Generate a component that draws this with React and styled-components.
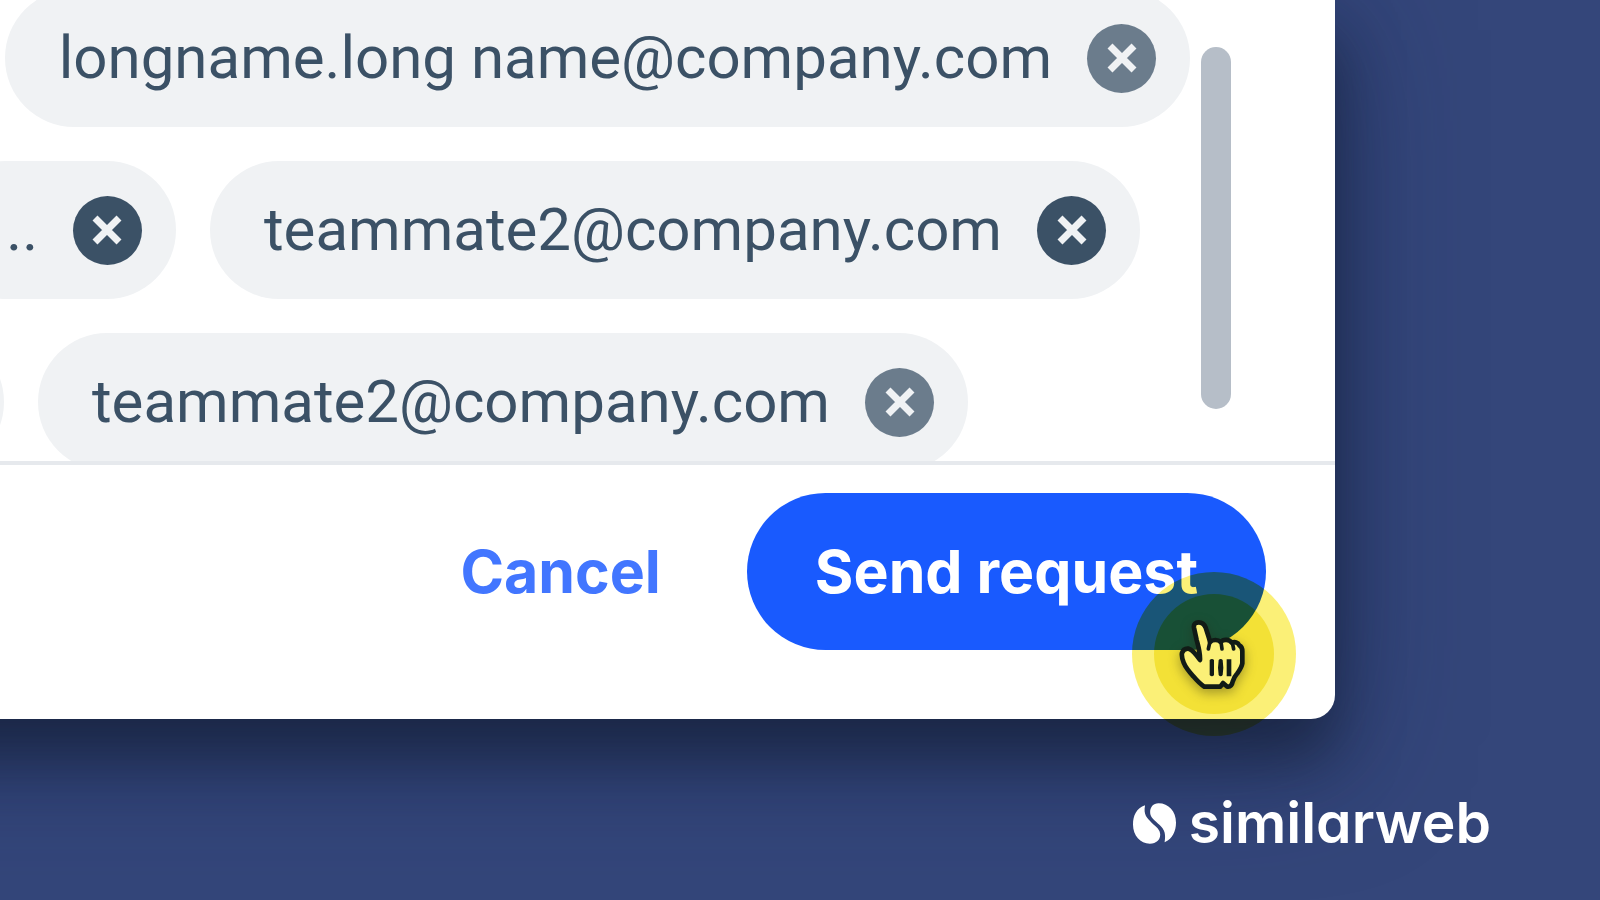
import React from "react";
import styled, { createGlobalStyle } from "styled-components";

const GlobalStyle = createGlobalStyle`
  * {
    box-sizing: border-box;
  }

  body {
    margin: 0;
    background: #34467a;
    overflow: hidden;
  }
`;

const Page = styled.main`
  display: flex;
  flex-direction: column;
  min-height: 100vh;
  overflow: hidden;
`;

const Dialog = styled.section`
  position: relative;
  margin: 0 265px 0 -240px;
  background: #fff;
  border-bottom-right-radius: 24px;
  box-shadow:
    0 40px 60px rgba(14, 22, 36, 0.5),
    0 30px 130px rgba(20, 36, 80, 0.5);
`;

const Recipients = styled.div`
  display: flex;
  gap: 11px;
  height: 461px;
  padding-right: 104px;
  overflow: hidden;
`;

const ChipList = styled.ul`
  display: flex;
  flex: 1;
  flex-direction: column;
  gap: 34px;
  min-width: 0;
  margin: -11px 0 0;
  padding: 0;
  list-style: none;
`;

const ChipRow = styled.li`
  display: flex;
  flex-shrink: 0;
  justify-content: flex-end;
  gap: 34px;
  padding-right: ${({ $inset }) => $inset}px;
`;

const Chip = styled.div`
  display: flex;
  flex-shrink: 0;
  align-items: center;
  justify-content: flex-end;
  gap: 35px;
  min-width: 240px;
  height: 138px;
  padding: 0 34px 0 54px;
  border-radius: 69px;
  background: #f0f2f4;
  color: #3b5166;
  font-family: Roboto, sans-serif;
  font-size: 60px;
  line-height: 72px;
  white-space: nowrap;
`;

const RemoveButton = styled.button`
  display: flex;
  align-items: center;
  justify-content: center;
  width: 69px;
  height: 69px;
  padding: 0;
  border: 0;
  border-radius: 50%;
  background: ${({ $muted }) => ($muted ? "#6b7c8c" : "#3b5166")};
  color: #f0f2f4;
  cursor: pointer;
`;

const ScrollThumb = styled.div`
  flex-shrink: 0;
  width: 30px;
  height: 362px;
  margin-top: 47px;
  border-radius: 15px;
  background: #b6bec8;
`;

const Footer = styled.footer`
  display: flex;
  align-items: center;
  justify-content: flex-end;
  gap: 18px;
  padding: 28px 69px 69px;
  border-top: 4px solid #e6e9ed;
`;

const Action = styled.button`
  height: 157px;
  padding: 0 68px;
  border: 0;
  border-radius: 79px;
  background: ${({ $primary }) => ($primary ? "#195afe" : "transparent")};
  color: ${({ $primary }) => ($primary ? "#fff" : "#4276ff")};
  font-family: Inter, sans-serif;
  font-size: 59px;
  font-weight: 700;
  line-height: 72px;
  white-space: nowrap;
  cursor: pointer;
`;

const Ring = styled.div`
  position: absolute;
  right: 39px;
  bottom: -17px;
  display: flex;
  align-items: center;
  justify-content: center;
  width: 164px;
  height: 164px;
  border-radius: 50%;
  background: #fbf077;
  mix-blend-mode: multiply;
  pointer-events: none;

  &::after {
    content: "";
    width: 120px;
    height: 120px;
    border-radius: 50%;
    background: #f3e136;
  }
`;

const Pointer = styled.svg`
  position: absolute;
  right: 39px;
  bottom: -18px;
  width: 164px;
  height: 164px;
  filter: drop-shadow(0 4px 6px rgba(40, 40, 20, 0.4));
  pointer-events: none;
`;

const Brand = styled.a`
  display: flex;
  align-items: center;
  align-self: flex-end;
  gap: 13px;
  margin: 68px 109px 0 0;
  color: #fff;
  font-family: Inter, sans-serif;
  font-size: 57px;
  font-weight: 600;
  line-height: 72px;
  font-feature-settings: "cv11";
  text-decoration: none;
  z-index: 1;
`;

const rows = [
  { inset: 0, chips: [{ label: "longname.long name@company.com", muted: true }] },
  { inset: 50, chips: [{ label: ".." }, { label: "teammate2@company.com" }] },
  { inset: 222, chips: [{ label: "" }, { label: "teammate2@company.com", muted: true }] },
];

function Recipient({ label, muted }) {
  return (
    <Chip>
      {label && <span>{label}</span>}
      {label && (
        <RemoveButton type="button" aria-label="Remove" $muted={muted}>
          <svg width="30" height="30" viewBox="0 0 30 30" aria-hidden="true">
            <path d="M3 3L27 27M27 3L3 27" stroke="currentColor" strokeWidth="7" />
          </svg>
        </RemoveButton>
      )}
    </Chip>
  );
}

function HandPointer() {
  return (
    <Pointer viewBox="97 98 492 492" aria-hidden="true">
      <path
        d="M283 262C281 251 288 246 297 246C307 246 314 251 318 262C323 278 328 291 331 305C339 297 355 297 363 305C371 296 389 296 397 308C405 303 415 306 419 315C425 318 428 325 428 333L428 369C426 381 419 390 413 399C406 407 402 413 399 424C397 435 391 440 383 439L370 428L362 439L314 439C304 433 292 421 281 408C269 395 258 382 252 367C248 357 245 348 247 338C250 328 258 324 267 325C278 328 288 340 301 359C302 337 296 318 291 299Z"
        fill="#fbf077"
        stroke="#111b16"
        strokeWidth="14"
        strokeLinejoin="round"
      />
      <path
        d="M331 303L326 326M364 305L367 326M398 307L402 326"
        stroke="#111b16"
        strokeWidth="11"
        strokeLinecap="round"
      />
      <path
        d="M330 359C334 355 340 355 343 359V404C340 409 334 409 330 404ZM357 359C360 355 366 355 369 359L371 382L369 404C366 409 360 409 357 404L355 382ZM381 357H395V408H381Z"
        fill="#111b16"
      />
    </Pointer>
  );
}

function BrandMark() {
  return (
    <svg width="43" height="41" viewBox="42 73 128 122" fill="currentColor" aria-hidden="true">
      <path d="M78 80C52 88 42 112 42 137C42 170 64 194 92 194C112 194 123 183 123 167C123 152 112 145 99 133C84 119 72 108 78 80Z" />
      <path d="M136 190C160 180 170 156 170 132C170 98 148 74 118 74C102 74 93 86 93 100C93 116 104 123 116 134C131 147 142 158 136 190Z" />
    </svg>
  );
}

export default function App() {
  return (
    <Page>
      <GlobalStyle />
      <Dialog>
        <Recipients>
          <ChipList>
            {rows.map((row) => (
              <ChipRow key={row.inset} $inset={row.inset}>
                {row.chips.map((chip) => (
                  <Recipient key={chip.label} {...chip} />
                ))}
              </ChipRow>
            ))}
          </ChipList>
          <ScrollThumb />
        </Recipients>
        <Footer>
          <Action type="button">Cancel</Action>
          <Action type="button" $primary>
            Send request
          </Action>
        </Footer>
        <Ring />
        <HandPointer />
      </Dialog>
      <Brand href="#">
        <BrandMark />
        similarweb
      </Brand>
    </Page>
  );
}
